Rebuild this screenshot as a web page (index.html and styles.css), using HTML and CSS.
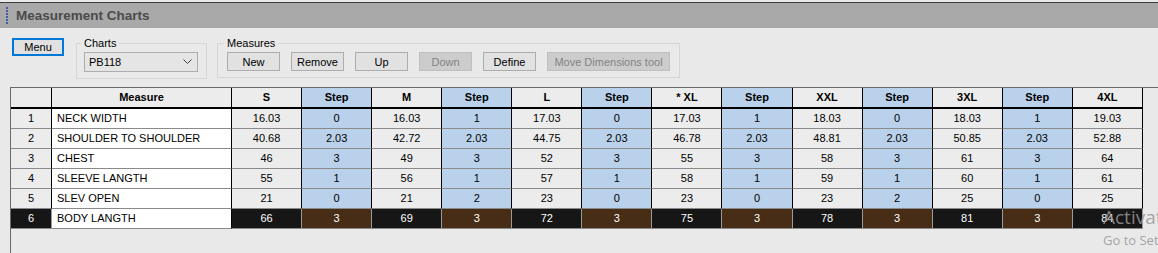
FILE: index.html
```html
<!DOCTYPE html>
<html lang="en">
<head>
    <meta charset="UTF-8">
    <title>Measurement Charts</title>
    <link rel="stylesheet" href="styles.css">
</head>
<body>
    <div class="titlebar">
        <span class="grip"></span>
        <span class="title">Measurement Charts</span>
    </div>

    <div class="toolbar">
        <button class="btn btn-menu">Menu</button>
        <fieldset class="group group-charts">
            <legend>Charts</legend>
            <div class="select">
                <span>PB118</span>
                <svg width="9" height="6" viewBox="0 0 9 6"><polyline points="0.5,0.5 4.5,4.5 8.5,0.5" fill="none" stroke="#404040" stroke-width="1"/></svg>
            </div>
        </fieldset>
        <fieldset class="group group-measures">
            <legend>Measures</legend>
            <div class="btn-row">
                <button class="btn">New</button>
                <button class="btn">Remove</button>
                <button class="btn">Up</button>
                <button class="btn" disabled>Down</button>
                <button class="btn">Define</button>
                <button class="btn btn-wide" disabled>Move Dimensions tool</button>
            </div>
        </fieldset>
    </div>

    <div class="grid">
        <table id="chart">
            <thead>
                <tr>
                    <th class="rowhead"></th>
                    <th class="name">Measure</th>
                    <th>S</th><th class="step">Step</th>
                    <th>M</th><th class="step">Step</th>
                    <th>L</th><th class="step">Step</th>
                    <th>* XL</th><th class="step">Step</th>
                    <th>XXL</th><th class="step">Step</th>
                    <th>3XL</th><th class="step">Step</th>
                    <th>4XL</th>
                </tr>
            </thead>
            <tbody></tbody>
        </table>
    </div>

    <div class="watermark">
        <div class="wm-big">Activate Windows</div>
        <div class="wm-small">Go to Settings to activate Windows.</div>
    </div>

    <script>
        const rows = [
            { name: "NECK WIDTH", values: ["16.03", "0", "16.03", "1", "17.03", "0", "17.03", "1", "18.03", "0", "18.03", "1", "19.03"] },
            { name: "SHOULDER TO SHOULDER", values: ["40.68", "2.03", "42.72", "2.03", "44.75", "2.03", "46.78", "2.03", "48.81", "2.03", "50.85", "2.03", "52.88"] },
            { name: "CHEST", values: ["46", "3", "49", "3", "52", "3", "55", "3", "58", "3", "61", "3", "64"] },
            { name: "SLEEVE LANGTH", values: ["55", "1", "56", "1", "57", "1", "58", "1", "59", "1", "60", "1", "61"] },
            { name: "SLEV OPEN", values: ["21", "0", "21", "2", "23", "0", "23", "0", "23", "2", "25", "0", "25"] },
            { name: "BODY LANGTH", values: ["66", "3", "69", "3", "72", "3", "75", "3", "78", "3", "81", "3", "84"] }
        ];
        const body = document.querySelector("#chart tbody");
        rows.forEach((row, i) => {
            const tr = document.createElement("tr");
            if (i === rows.length - 1) tr.className = "selected";
            let html = `<td class="rowhead">${i + 1}</td><td class="name">${row.name}</td>`;
            row.values.forEach((v, j) => {
                html += `<td class="${j % 2 ? 'step' : 'size'}">${v}</td>`;
            });
            tr.innerHTML = html;
            body.appendChild(tr);
        });
    </script>
</body>
</html>
```

FILE: styles.css
```css
html, body {
    margin: 0;
    height: 253px;
    overflow: hidden;
}
body {
    position: relative;
    display: flex;
    flex-direction: column;
    background: #e9e9e9;
    font-family: "Liberation Sans", Arial, sans-serif;
    font-size: 11px;
    color: #000;
}
.titlebar {
    flex: none;
    margin-top: 2px;
    border-top: 1px solid #3a3a3a;
    height: 25px;
    background: #a9a9a9;
    display: flex;
    align-items: center;
    padding-left: 6px;
}
.grip {
    width: 2px;
    height: 18px;
    background-image: linear-gradient(#3f5f9f 60%, transparent 60%);
    background-size: 2px 3px;
}
.title {
    margin-left: 8px;
    font-size: 13.5px;
    font-weight: bold;
    color: #4b4b4b;
}
.toolbar {
    flex: none;
    display: flex;
    align-items: flex-start;
    height: 59px;
    box-sizing: border-box;
    padding: 10px 0 0 12px;
}
.btn {
    font-family: inherit;
    font-size: 11px;
    color: #000;
    background: #e1e1e1;
    border: 1px solid #adadad;
    width: 53px;
    height: 19px;
    padding: 0;
    margin: 0;
}
.btn:disabled {
    background: #cccccc;
    border-color: #bfbfbf;
    color: #838383;
}
.btn-menu {
    width: 52px;
    height: 18px;
    border: 2px solid #0078d7;
    margin-right: 12px;
}
.btn-wide {
    width: 123px;
}
.group {
    margin: -1px 10px 0 0;
    border: 1px solid #d6d6d6;
    padding: 2px 9px 6px 9px;
}
.group legend {
    padding: 0 3px;
    margin-left: -3px;
    line-height: 13px;
}
.group-charts {
    padding: 2px 8px 6px 7px;
}
.select {
    box-sizing: border-box;
    width: 114px;
    height: 20px;
    border: 1px solid #adadad;
    background: #e5e5e5;
    display: flex;
    align-items: center;
    justify-content: space-between;
    padding: 0 4px;
}
.select svg {
    margin-right: 1px;
}
.btn-row {
    display: flex;
    gap: 11px;
}
.grid {
    flex: 1;
    min-height: 0;
    margin-left: 10px;
    border-left: 1px solid #6b6b6b;
    border-top: 1px solid #6b6b6b;
}
#chart {
    border-collapse: separate;
    border-spacing: 0;
    table-layout: fixed;
    width: 1132px;
}
#chart th, #chart td {
    padding: 0 0 1px 0;
    text-align: center;
    vertical-align: middle;
    line-height: 13px;
    border-right: 1px solid #000;
    white-space: nowrap;
    overflow: hidden;
}
#chart th {
    height: 18px;
    background: #ececec;
    border-bottom: 2px solid #000;
    font-weight: bold;
}
#chart td {
    height: 18px;
    border-bottom: 1px solid #8a8a8a;
    background: #ececec;
}
#chart .rowhead { width: 40px; }
#chart .name { width: 179px; }
#chart td.name {
    background: #fff;
    text-align: left;
    padding-left: 5px;
}
#chart .step { background: #b9d1ea; }
#chart tr.selected td {
    background: #161616;
    color: #fff;
    border-right-color: #9a9a9a;
}
#chart tr.selected td.step { background: #472d16; }
#chart tr.selected td.name {
    background: #fff;
    color: #000;
    border-right-color: #000;
}
.watermark {
    position: absolute;
    left: 1103px;
    right: 0;
    top: 205px;
    overflow: hidden;
    color: rgba(150, 150, 150, 0.85);
    font-family: "Open Sans", sans-serif;
    white-space: nowrap;
}
.wm-big {
    font-size: 19px;
    line-height: 24px;
}
.wm-small {
    font-size: 13px;
    line-height: 18px;
    margin-top: 2px;
}
```
